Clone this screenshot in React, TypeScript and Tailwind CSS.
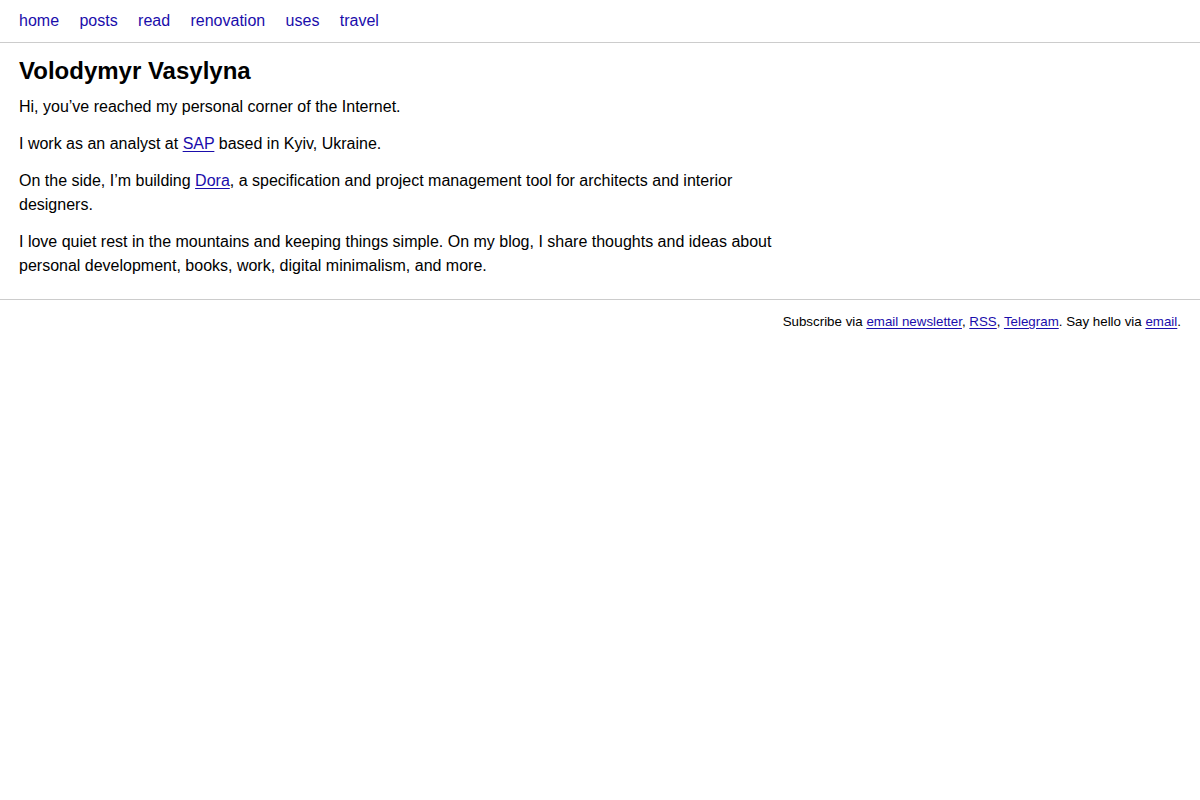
import type { ReactNode } from "react";

const navItems = ["home", "posts", "read", "renovation", "uses", "travel"];

function Link({ children }: { children: ReactNode }) {
  return (
    <a href="#" className="text-[#1a0dab] underline underline-offset-2">
      {children}
    </a>
  );
}

export default function App() {
  return (
    <div className="min-h-screen bg-white text-black font-['Liberation_Sans',Arial,sans-serif] text-base leading-6">
      <nav className="h-[43px] border-b border-[#cccccc] px-[19px] flex items-center gap-[20.4px]">
        {navItems.map((item) => (
          <a key={item} href="#" className="text-[#1a0dab]">
            {item}
          </a>
        ))}
      </nav>

      <main className="px-[19px] pt-[12px] pb-[21px] max-w-[790px] box-content">
        <h1 className="text-2xl font-bold leading-8 mb-[8px]">Volodymyr Vasylyna</h1>
        <div className="flex flex-col gap-[13px]">
          <p>Hi, you’ve reached my personal corner of the Internet.</p>
          <p>
            I work as an analyst at <Link>SAP</Link> based in Kyiv, Ukraine.
          </p>
          <p>
            On the side, I’m building <Link>Dora</Link>, a specification and project management tool for
            architects and interior designers.
          </p>
          <p>
            I love quiet rest in the mountains and keeping things simple. On my blog, I share thoughts and
            ideas about personal development, books, work, digital minimalism, and more.
          </p>
        </div>
      </main>

      <footer className="border-t border-[#cccccc] px-[19px] pt-[12px] text-[13.33px] leading-5 text-right">
        Subscribe via <Link>email newsletter</Link>, <Link>RSS</Link>, <Link>Telegram</Link>. Say hello via{" "}
        <Link>email</Link>.
      </footer>
    </div>
  );
}
